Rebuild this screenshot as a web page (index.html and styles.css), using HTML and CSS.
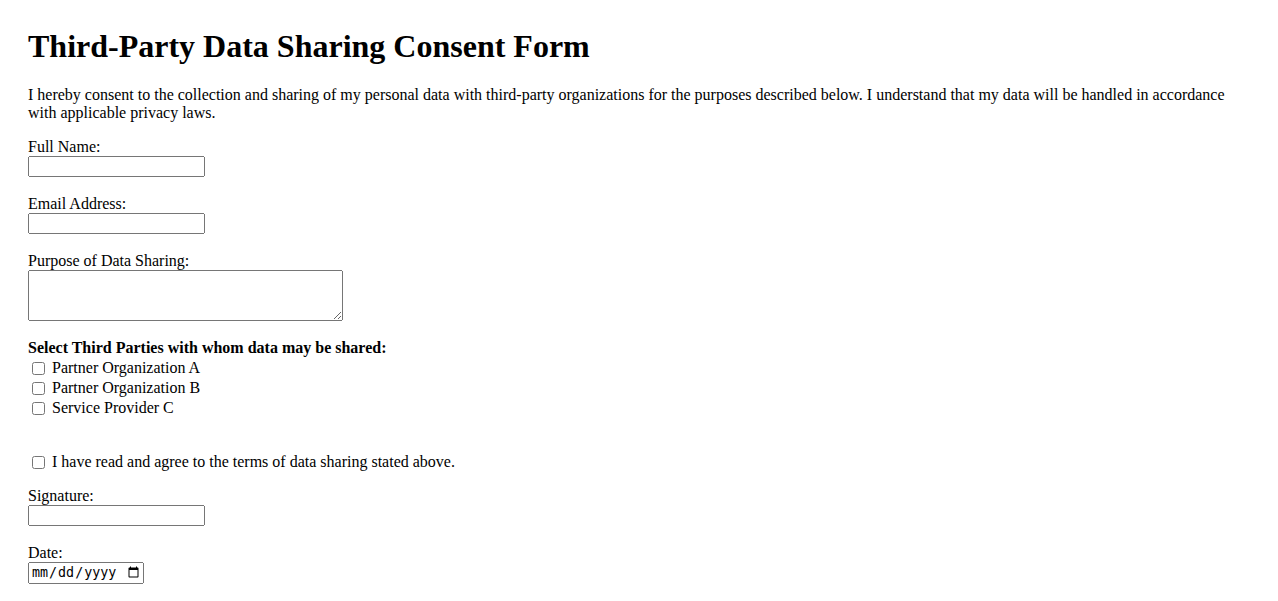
FILE: index.html
```html
<!DOCTYPE html>
<html lang="en">
<head>
  <meta charset="UTF-8">
  <meta name="viewport" content="width=device-width, initial-scale=1.0">
  <title>Third-Party Data Sharing Consent Form</title>
  <link rel="stylesheet" href="styles.css">
</head>
<body>
  <h1>Third-Party Data Sharing Consent Form</h1>

  <p>I hereby consent to the collection and sharing of my personal data with third-party organizations for the purposes described below. I understand that my data will be handled in accordance with applicable privacy laws.</p>

  <form>
    <label for="fullName">Full Name:</label><br>
    <input type="text" id="fullName" name="fullName"><br><br>

    <label for="email">Email Address:</label><br>
    <input type="email" id="email" name="email"><br><br>

    <label for="purpose">Purpose of Data Sharing:</label><br>
    <textarea id="purpose" name="purpose" rows="3" cols="40"></textarea>

    <div class="parties">
      <div class="parties-title">Select Third Parties with whom data may be shared:</div>
      <div class="option">
        <input type="checkbox" id="partnerA" name="parties" value="A">
        <label for="partnerA">Partner Organization A</label>
      </div>
      <div class="option">
        <input type="checkbox" id="partnerB" name="parties" value="B">
        <label for="partnerB">Partner Organization B</label>
      </div>
      <div class="option">
        <input type="checkbox" id="providerC" name="parties" value="C">
        <label for="providerC">Service Provider C</label>
      </div>
    </div>

    <div class="option agree">
      <input type="checkbox" id="agree" name="agree">
      <label for="agree">I have read and agree to the terms of data sharing stated above.</label>
    </div>

    <div class="field">
      <label for="signature">Signature:</label><br>
      <input type="text" id="signature" name="signature">
    </div>

    <div class="field">
      <label for="date">Date:</label><br>
      <input type="date" id="date" name="date">
    </div>
  </form>
</body>
</html>
```

FILE: styles.css
```css
body {
  font-family: "Liberation Serif", "Times New Roman", serif;
  font-size: 16px;
  margin: 0;
  padding: 28px;
  color: #000;
  background: #fff;
}

h1 {
  font-size: 32px;
  margin: 0 0 21px;
}

p {
  margin: 0 0 16px;
}

input[type="text"],
input[type="email"] {
  box-sizing: border-box;
  width: 177px;
  height: 21px;
}

textarea {
  box-sizing: border-box;
  display: block;
  width: 315px;
  height: 51px;
}

input[type="date"] {
  box-sizing: border-box;
  width: 116px;
  height: 22px;
}

.parties {
  margin-top: 17px;
}

.parties-title {
  font-weight: bold;
  line-height: 20px;
}

.option {
  display: flex;
  align-items: center;
  height: 20px;
}

.option input {
  margin: 0 7px 0 4px;
}

.agree {
  margin-top: 34px;
}

.field {
  margin-top: 15px;
}

.field + .field {
  margin-top: 18px;
}
```
